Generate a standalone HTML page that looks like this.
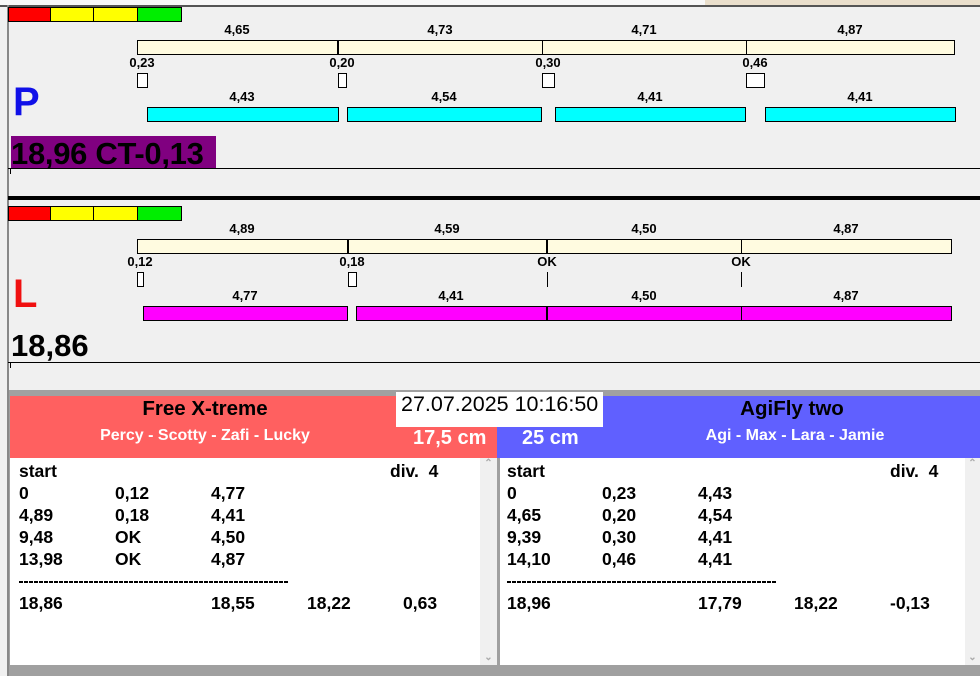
<!DOCTYPE html>
<html><head><meta charset="utf-8"><style>
*{margin:0;padding:0;box-sizing:border-box}
body{width:980px;height:676px;background:#f0f0f0;position:relative;overflow:hidden;font-family:"Liberation Sans",Arial,sans-serif;font-weight:bold;color:#000}
.a{position:absolute}
.b{position:absolute;border:1px solid #000}
.l{position:absolute;font-size:13px;transform:translateX(-50%);white-space:nowrap}
.t{position:absolute;font-size:17.5px;white-space:nowrap}
.d{position:absolute;height:2px;width:270px;background:repeating-linear-gradient(90deg,#000 0 4px,transparent 4px 5px)}
</style></head><body>
<div class="a" style="left:0;top:0;width:705px;height:5px;background:#f8f8f8"></div>
<div class="a" style="left:705px;top:0;width:275px;height:5px;background:#eadfcc"></div>
<div class="a" style="left:0;top:5px;width:980px;height:2px;background:#555"></div>
<div class="a" style="left:7px;top:5px;width:2px;height:390px;background:#888"></div>

<div class="b" style="left:8px;top:7px;width:43px;height:15px;background:#f00"></div>
<div class="b" style="left:50px;top:7px;width:44px;height:15px;background:#ff0"></div>
<div class="b" style="left:93px;top:7px;width:45px;height:15px;background:#ff0"></div>
<div class="b" style="left:137px;top:7px;width:45px;height:15px;background:#0e0"></div>
<div class="b" style="left:137px;top:40px;width:818px;height:15px;background:#fffbe0"></div>
<div class="a" style="left:337px;top:40px;width:2px;height:15px;background:#000"></div>
<div class="a" style="left:542px;top:40px;width:1px;height:15px;background:#000"></div>
<div class="a" style="left:746px;top:40px;width:1px;height:15px;background:#000"></div>
<div class="l" style="left:237px;top:22px">4,65</div>
<div class="l" style="left:440px;top:22px">4,73</div>
<div class="l" style="left:644px;top:22px">4,71</div>
<div class="l" style="left:850px;top:22px">4,87</div>
<div class="l" style="left:142px;top:55px">0,23</div>
<div class="l" style="left:342px;top:55px">0,20</div>
<div class="l" style="left:548px;top:55px">0,30</div>
<div class="l" style="left:755px;top:55px">0,46</div>
<div class="b" style="left:137px;top:73px;width:11px;height:15px;background:#fff"></div>
<div class="b" style="left:338px;top:73px;width:9px;height:15px;background:#fff"></div>
<div class="b" style="left:542px;top:73px;width:13px;height:15px;background:#fff"></div>
<div class="b" style="left:746px;top:73px;width:19px;height:15px;background:#fff"></div>
<div class="a" style="left:13px;top:80px;font-size:40px;color:#1010e8">P</div>
<div class="l" style="left:242px;top:89px">4,43</div>
<div class="l" style="left:444px;top:89px">4,54</div>
<div class="l" style="left:650px;top:89px">4,41</div>
<div class="l" style="left:860px;top:89px">4,41</div>
<div class="b" style="left:147px;top:107px;width:192px;height:15px;background:#0ff"></div>
<div class="b" style="left:347px;top:107px;width:195px;height:15px;background:#0ff"></div>
<div class="b" style="left:555px;top:107px;width:191px;height:15px;background:#0ff"></div>
<div class="b" style="left:765px;top:107px;width:191px;height:15px;background:#0ff"></div>
<div class="a" style="left:11px;top:136px;width:205px;height:32px;background:#800080"></div>
<div class="a" style="left:11px;top:137px;font-size:31px;line-height:34px;letter-spacing:-0.3px;white-space:nowrap">18,96 CT-0,13</div>
<div class="a" style="left:8px;top:168px;width:972px;height:1px;background:#000"></div>
<div class="a" style="left:10px;top:168px;width:1px;height:6px;background:#000"></div>
<div class="a" style="left:8px;top:196px;width:972px;height:4px;background:#000"></div>

<div class="b" style="left:8px;top:206px;width:43px;height:15px;background:#f00"></div>
<div class="b" style="left:50px;top:206px;width:44px;height:15px;background:#ff0"></div>
<div class="b" style="left:93px;top:206px;width:45px;height:15px;background:#ff0"></div>
<div class="b" style="left:137px;top:206px;width:45px;height:15px;background:#0e0"></div>
<div class="b" style="left:137px;top:239px;width:815px;height:15px;background:#fffbe0"></div>
<div class="a" style="left:347px;top:239px;width:2px;height:15px;background:#000"></div>
<div class="a" style="left:546px;top:239px;width:2px;height:15px;background:#000"></div>
<div class="a" style="left:741px;top:239px;width:1px;height:15px;background:#000"></div>
<div class="l" style="left:242px;top:221px">4,89</div>
<div class="l" style="left:447px;top:221px">4,59</div>
<div class="l" style="left:644px;top:221px">4,50</div>
<div class="l" style="left:846px;top:221px">4,87</div>
<div class="l" style="left:140px;top:254px">0,12</div>
<div class="l" style="left:352px;top:254px">0,18</div>
<div class="l" style="left:547px;top:254px">OK</div>
<div class="l" style="left:741px;top:254px">OK</div>
<div class="b" style="left:137px;top:272px;width:7px;height:15px;background:#fff"></div>
<div class="b" style="left:348px;top:272px;width:9px;height:15px;background:#fff"></div>
<div class="a" style="left:547px;top:272px;width:1px;height:15px;background:#000"></div>
<div class="a" style="left:741px;top:272px;width:1px;height:15px;background:#000"></div>
<div class="a" style="left:13px;top:272px;font-size:40px;color:#f01010">L</div>
<div class="l" style="left:245px;top:288px">4,77</div>
<div class="l" style="left:451px;top:288px">4,41</div>
<div class="l" style="left:644px;top:288px">4,50</div>
<div class="l" style="left:846px;top:288px">4,87</div>
<div class="b" style="left:143px;top:306px;width:205px;height:15px;background:#f0f"></div>
<div class="b" style="left:356px;top:306px;width:596px;height:15px;background:#f0f"></div>
<div class="a" style="left:546px;top:306px;width:2px;height:15px;background:#000"></div>
<div class="a" style="left:741px;top:306px;width:1px;height:15px;background:#000"></div>
<div class="a" style="left:11px;top:329px;font-size:31px;line-height:34px">18,86</div>
<div class="a" style="left:8px;top:362px;width:972px;height:1px;background:#000"></div>
<div class="a" style="left:10px;top:362px;width:1px;height:6px;background:#000"></div>

<div class="a" style="left:0;top:390px;width:980px;height:286px;background:#a0a0a0"></div>
<div class="a" style="left:0;top:390px;width:7px;height:286px;background:#f0f0f0"></div>
<div class="a" style="left:7px;top:390px;width:2px;height:286px;background:#888"></div>
<div class="a" style="left:10px;top:396px;width:487px;height:62px;background:#ff6060"></div>
<div class="a" style="left:497px;top:396px;width:483px;height:62px;background:#6060ff"></div>
<div class="a" style="left:396px;top:392px;width:207px;height:35px;background:#fff"></div>
<div class="a" style="left:401px;top:392px;font-size:21.5px;font-weight:normal;white-space:nowrap">27.07.2025 10:16:50</div>
<div class="a" style="left:205px;top:397px;font-size:20.5px;transform:translateX(-50%);white-space:nowrap">Free X-treme</div>
<div class="a" style="left:205px;top:427px;font-size:16px;color:#fff;transform:translateX(-50%);white-space:nowrap">Percy - Scotty - Zafi - Lucky</div>
<div class="a" style="left:413px;top:427px;font-size:20px;color:#fff;white-space:nowrap">17,5 cm</div>
<div class="a" style="left:522px;top:427px;font-size:20px;color:#fff;white-space:nowrap">25 cm</div>
<div class="a" style="left:792px;top:397px;font-size:20.5px;transform:translateX(-50%);white-space:nowrap">AgiFly two</div>
<div class="a" style="left:795px;top:427px;font-size:16px;color:#fff;transform:translateX(-50%);white-space:nowrap">Agi - Max - Lara - Jamie</div>

<div class="a" style="left:10px;top:458px;width:470px;height:207px;background:#fff"></div>
<div class="a" style="left:480px;top:458px;width:17px;height:207px;background:#f0f0f0;color:#aaa;font-size:10px;text-align:center">⌃<div style="position:absolute;bottom:2px;width:17px">⌄</div></div>
<div class="a" style="left:497px;top:458px;width:3px;height:207px;background:#a0a0a0"></div>
<div class="a" style="left:500px;top:458px;width:465px;height:207px;background:#fff"></div>
<div class="a" style="left:965px;top:458px;width:15px;height:207px;background:#f0f0f0;color:#aaa;font-size:10px;text-align:center">⌃<div style="position:absolute;bottom:2px;width:15px">⌄</div></div>

<div class="t" style="left:19px;top:461px">start</div><div class="t" style="left:390px;top:461px">div.&nbsp; 4</div>
<div class="t" style="left:19px;top:483px">0</div><div class="t" style="left:115px;top:483px">0,12</div><div class="t" style="left:211px;top:483px">4,77</div>
<div class="t" style="left:19px;top:505px">4,89</div><div class="t" style="left:115px;top:505px">0,18</div><div class="t" style="left:211px;top:505px">4,41</div>
<div class="t" style="left:19px;top:527px">9,48</div><div class="t" style="left:115px;top:527px">OK</div><div class="t" style="left:211px;top:527px">4,50</div>
<div class="t" style="left:19px;top:549px">13,98</div><div class="t" style="left:115px;top:549px">OK</div><div class="t" style="left:211px;top:549px">4,87</div>
<div class="d" style="left:19px;top:581px"></div>
<div class="t" style="left:19px;top:593px">18,86</div><div class="t" style="left:211px;top:593px">18,55</div><div class="t" style="left:307px;top:593px">18,22</div><div class="t" style="left:403px;top:593px">0,63</div>

<div class="t" style="left:507px;top:461px">start</div><div class="t" style="left:890px;top:461px">div.&nbsp; 4</div>
<div class="t" style="left:507px;top:483px">0</div><div class="t" style="left:602px;top:483px">0,23</div><div class="t" style="left:698px;top:483px">4,43</div>
<div class="t" style="left:507px;top:505px">4,65</div><div class="t" style="left:602px;top:505px">0,20</div><div class="t" style="left:698px;top:505px">4,54</div>
<div class="t" style="left:507px;top:527px">9,39</div><div class="t" style="left:602px;top:527px">0,30</div><div class="t" style="left:698px;top:527px">4,41</div>
<div class="t" style="left:507px;top:549px">14,10</div><div class="t" style="left:602px;top:549px">0,46</div><div class="t" style="left:698px;top:549px">4,41</div>
<div class="d" style="left:507px;top:581px"></div>
<div class="t" style="left:507px;top:593px">18,96</div><div class="t" style="left:698px;top:593px">17,79</div><div class="t" style="left:794px;top:593px">18,22</div><div class="t" style="left:890px;top:593px">-0,13</div>
</body></html>
